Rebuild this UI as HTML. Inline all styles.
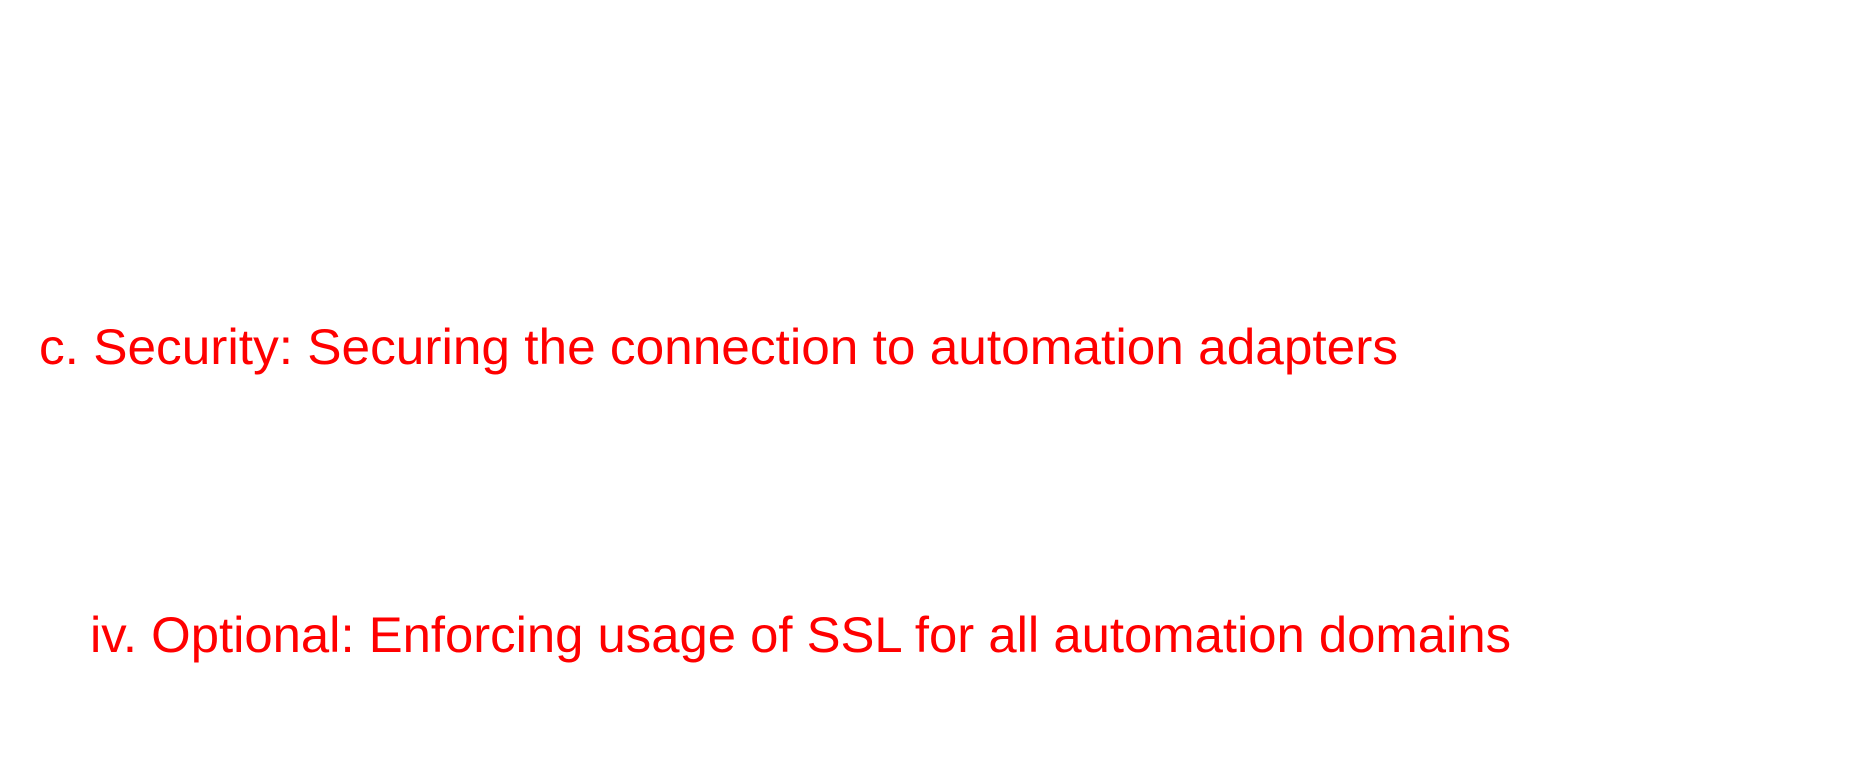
<!DOCTYPE html>
<html><head><meta charset="utf-8"><style>
html,body{margin:0;padding:0;background:#fff;width:1873px;height:757px;overflow:hidden}
svg{display:block}
text{font-family:"Liberation Sans",sans-serif;font-size:50px;fill:#ff0000}
</style></head><body>
<svg width="1873" height="757" xmlns="http://www.w3.org/2000/svg">
<text x="39" y="364" textLength="1359" lengthAdjust="spacingAndGlyphs">c. Security: Securing the connection to automation adapters</text>
<text x="90" y="652" textLength="1421" lengthAdjust="spacingAndGlyphs">iv. Optional: Enforcing usage of SSL for all automation domains</text>
</svg>
</body></html>
